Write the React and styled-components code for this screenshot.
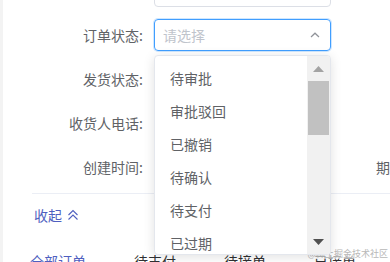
import React from "react";
import styled, { createGlobalStyle } from "styled-components";

const GlobalStyle = createGlobalStyle`
  html, body {
    margin: 0;
    padding: 0;
    background: #f3f3f3;
    overflow: hidden;
  }
  body {
    font-family: "Noto Sans CJK SC", "Noto Sans", sans-serif;
  }
`;

const PANEL = styled.div`
  position: relative;
  margin-left: 3px;
  height: 262px;
  background: #fff;
  overflow: hidden;
`;

const FORM = styled.div`
  margin-top: -25px;
  display: flex;
  flex-direction: column;
  gap: 12px;
`;

const ROW = styled.div`
  display: flex;
  align-items: center;
  height: 32px;
  white-space: nowrap;
`;

const LABEL = styled.div`
  width: 140px;
  text-align: right;
  font-size: 14px;
  color: #606266;
  flex-shrink: 0;
`;

const FIELD = styled.div`
  position: relative;
  margin-left: 11px;
  width: 177px;
  height: 32px;
  box-sizing: border-box;
  border: 1px solid ${p => (p.focused ? "#409eff" : p.hidden ? "transparent" : "#dcdfe6")};
  border-radius: 4px;
  box-shadow: ${p => (p.focused ? "0 0 0 1px rgba(64,158,255,0.25)" : "none")};
  display: flex;
  align-items: center;
  justify-content: space-between;
  padding: 0 10px 0 8px;
  flex-shrink: 0;
`;

const PLACEHOLDER = styled.span`
  font-size: 14px;
  color: #c0c4cc;
`;

const SIDE_LABEL = styled.div`
  margin-left: 45px;
  font-size: 14px;
  color: #606266;
`;

const DROPDOWN = styled.div`
  position: absolute;
  top: 35px;
  left: -1px;
  width: 177px;
  height: 200px;
  box-sizing: border-box;
  background: #fff;
  border: 1px solid #e4e7ed;
  border-radius: 4px;
  box-shadow: 0 2px 12px rgba(0, 0, 0, 0.12);
  display: flex;
  overflow: hidden;
  z-index: 5;
`;

const LIST = styled.ul`
  flex: 1;
  margin: 0;
  padding: 6px 0 0;
  list-style: none;
  overflow: hidden;
`;

const ITEM = styled.li`
  height: 33px;
  line-height: 33px;
  padding-left: 15px;
  font-size: 14px;
  color: #606266;
`;

const TRACK = styled.div`
  width: 23px;
  background: #f1f1f1;
  display: flex;
  flex-direction: column;
`;

const ARROW_BTN = styled.div`
  height: 25px;
  display: flex;
  align-items: center;
  justify-content: center;
`;

const THUMB = styled.div`
  height: 54px;
  margin: 0 1px;
  background: #c1c1c1;
`;

const TRACK_FILL = styled.div`
  flex: 1;
`;

const DIVIDER = styled.div`
  margin: 10px 0 0 29px;
  border-top: 1px solid #ebeef5;
`;

const COLLAPSE = styled.div`
  margin: 11px 0 0 31px;
  display: flex;
  align-items: center;
  gap: 5px;
  height: 20px;
  font-size: 14px;
  color: #4f5fc0;
`;

const TABS = styled.div`
  margin-top: 26px;
  padding-left: 27px;
  display: flex;
  gap: 48px;
  white-space: nowrap;
`;

const TAB = styled.div`
  font-size: 14px;
  line-height: 20px;
  color: ${p => (p.active ? "#4f5fc0" : "#303133")};
`;

const WATERMARK = styled.div`
  position: absolute;
  right: 2px;
  bottom: 3px;
  font-size: 9px;
  line-height: 11px;
  color: #b8b8b8;
  font-family: "Noto Sans CJK SC", serif;
  background: rgba(255, 255, 255, 0.6);
`;

const options = ["待审批", "审批驳回", "已撤销", "待确认", "待支付", "已过期", "已完成"];

const ChevronUp = () => (
  <svg width="10" height="6" viewBox="0 0 10 6">
    <polyline points="1,5 5,1.2 9,5" fill="none" stroke="#909399" strokeWidth="1.2" />
  </svg>
);

const DoubleUp = () => (
  <svg width="12" height="12" viewBox="0 0 12 12">
    <polyline points="1.5,6 6,1.5 10.5,6" fill="none" stroke="#4f5fc0" strokeWidth="1.1" />
    <polyline points="1.5,10.5 6,6 10.5,10.5" fill="none" stroke="#4f5fc0" strokeWidth="1.1" />
  </svg>
);

const Triangle = ({ down, color }) => (
  <svg width="11" height="6" viewBox="0 0 11 6">
    <polygon points={down ? "0,0 11,0 5.5,6" : "0,6 11,6 5.5,0"} fill={color} />
  </svg>
);

const App = () => {
  return (
    <PANEL>
      <GlobalStyle />
      <FORM>
        <ROW>
          <LABEL />
          <FIELD />
        </ROW>
        <ROW>
          <LABEL>订单状态:</LABEL>
          <FIELD focused>
            <PLACEHOLDER>请选择</PLACEHOLDER>
            <ChevronUp />
            <DROPDOWN>
              <LIST>
                {options.map(o => (
                  <ITEM key={o}>{o}</ITEM>
                ))}
              </LIST>
              <TRACK>
                <ARROW_BTN>
                  <Triangle color="#a3a3a3" />
                </ARROW_BTN>
                <THUMB />
                <TRACK_FILL />
                <ARROW_BTN>
                  <Triangle down color="#505050" />
                </ARROW_BTN>
              </TRACK>
            </DROPDOWN>
          </FIELD>
        </ROW>
        <ROW>
          <LABEL>发货状态:</LABEL>
        </ROW>
        <ROW>
          <LABEL>收货人电话:</LABEL>
        </ROW>
        <ROW>
          <LABEL>创建时间:</LABEL>
          <FIELD hidden />
          <SIDE_LABEL>期望时间:</SIDE_LABEL>
        </ROW>
      </FORM>
      <DIVIDER />
      <COLLAPSE>
        收起 <DoubleUp />
      </COLLAPSE>
      <TABS>
        <TAB active>全部订单</TAB>
        <TAB>待支付</TAB>
        <TAB>待接单</TAB>
        <TAB>已接单</TAB>
      </TABS>
      <WATERMARK>@稀土掘金技术社区</WATERMARK>
    </PANEL>
  );
};

export default App;
